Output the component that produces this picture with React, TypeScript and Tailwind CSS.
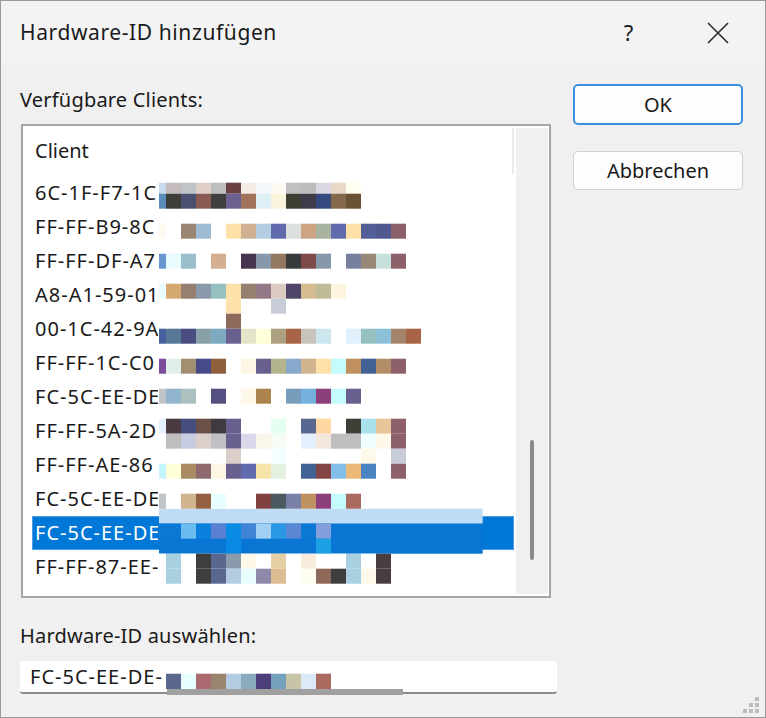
import React from "react";

// redaction mosaic, global 15px grid (x: 165 + 15*col, col -1 is the 7px sliver at 158)
const MOSAIC: [number, number, string][] = [
  [181.7, 11, "c9dcee c4bcbc c0c4c8 e0cfc8 bebebe 6b4040 f3ece4 f3f7fc fdfaf3 c0c0c0 bcbcbe dbd8e4 e8d8c8 fffff0"],
  [192.7, 15, "5b8bbb 3e3e38 4c5070 8a5a54 3f3f3f 6b6090 a0735a dcf0f6 faf3dc 3e3e32 3e3c48 344a7e 84684a 6a5234"],
  [222.7, 15, "fdf8f0 fff 9a8672 a0bcd4 fff fde1a8 cfb090 b4cce2 626aae dce0dc cca484 a8b4a0 626aae fde1a8 545e96 505890 8c606a"],
  [252.7, 15, "6a96d4 e8fcfe 9abecc fff d4b090 fff 46344e 8698aa 937860 383c3c 7f4a4a 8698aa fff 7880a0 978878 c6e0dc 8e606a"],
  [282.7, 15, "e8fcfe d4a870 967e70 8a9aaa 96c0c0 fde1a8 968070 947888 dccac0 504468 d4bc90 c0bc98 fdf5e0"],
  [297.7, 15, ". . . . . fde1a8 . . c8ccd8"],
  [312.7, 15, ". . . . . 8e6a5a"],
  [327.7, 15, "4660a0 587898 484c80 88a0a8 7eaac0 6a6090 e6e4c8 fefed8 aca080 a86446 c8c4bc cce6f0 fff e0f0fc 96c0c0 8cc0d8 a4846a a86446"],
  [357.7, 15, "7c4c9c e0f0e8 a28e70 464a88 8e603e fff fef6e4 6a6090 b4b48e 88a8cc d0b490 fde1a8 c4fcfc c09060 406294 b48e68 8e606a"],
  [387.7, 15, "c0c4c8 92b4cc acc0c0 fff 545080 fff fef8e8 aa844c fff 789cbc 74b0dc 8c3e7a c4fcfc 6a6090"],
  [417.7, 15, "e4f0fe 483a40 464e80 6a5046 3f3a40 6a6090 fff fff e4fef0 fff 586890 fed8a0 fff 3e3e36 a8e0ec e8c498 8e606a"],
  [432.7, 15, "fff bebebe c8cce0 dccec8 c0c0c4 6a6090 d8d8ea faf6ea f4fcf4 fff e4f0fe f4e8dc bebebe bebebe f0fefe fef8e8 8e606a"],
  [447.7, 15, ". . . . . dccec8 . . f4fefe . . . . . fef8e8 . c8ccd8"],
  [462.7, 15, "c4f4fc fefed8 aa8c64 8e6a6e fef6e4 6a6090 626aae f6e4a8 e4f0e0 fff 406294 824444 82bee8 ecb878 4a84c0 fff 8e606a"],
  [492.7, 15, "c0c4c8 fff d0b490 926040 e8fefe fff fff 804040 4a5a60 7880a8 be9260 8c3e7a c4fcfc aa6a60"],
  [522.7, 15, "0a78d4 0a78d4 6abcf0 0a80dc 5a80d4 0a8ce4 4084d8 a0d0f4 2a98e4 5a88d4 0a78d4 84a0dc"],
  [537.7, 15, ". . . . . 0a88e4 . . . . . 1ea0e4"],
  [552.7, 15, "fff a8d0e0 fff 3e3e3e 5a6890 8a9aaa fef8e8 fff e4d0a4 fff f8ecdc fff fff a8d0e0 fff 483e40"],
  [567.7, 15, "fff a8d0e0 fff 3e3e3e 5a6890 b4cce2 e8fefe 9088a8 dcbc90 fff fefef0 906858 3e3e3e a8d0e0 fef8e8 483e40"],
  [672.7, 15.3, ". 5a6890 e8fefe aa6a70 9a8470 b4cce2 8aaabe 4c3e7a 74a0bc c8c4a8 dceaf8 aa6a60"],
];

const ROWS = [
  "6C-1F-F7-1C",
  "FF-FF-B9-8C",
  "FF-FF-DF-A7",
  "A8-A1-59-01",
  "00-1C-42-9A",
  "FF-FF-1C-C0",
  "FC-5C-EE-DE",
  "FF-FF-5A-2D",
  "FF-FF-AE-86",
  "FC-5C-EE-DE",
  "FC-5C-EE-DE",
  "FF-FF-87-EE-",
];
const SELECTED = 10;

const Mosaic = () => (
  <svg className="pointer-events-none absolute left-0 top-0" width={766} height={718}>
    {/* selected row: pale strip over it, blue block below */}
    <rect x={158} y={507.7} width={323.7} height={15} fill="#c0dcf4" />
    <rect x={158} y={522.7} width={323.7} height={30} fill="#0a76d4" />
    {MOSAIC.map(([y, h, cells], r) =>
      cells.split(" ").map((c, i) =>
        c === "." ? null : (
          <rect
            key={`${r}-${i}`}
            x={i === 0 ? 158 : 165 + (i - 1) * 15}
            y={y}
            width={i === 0 ? 7 : 15}
            height={h}
            fill={"#" + c}
          />
        )
      )
    )}
    <rect x={166} y={688} width={236} height={6} fill="#a0a0a0" />
    {/* size grip */}
    {[
      [754, 696],
      [748, 702],
      [754, 702],
      [742, 708],
      [748, 708],
      [754, 708],
    ].map(([x, y]) => (
      <rect key={`${x}-${y}`} x={x} y={y} width={4} height={4} fill="#bdbdbd" />
    ))}
  </svg>
);

export default function App() {
  return (
    <div className="relative h-[718px] w-[766px] overflow-hidden border border-[#9a9a9a] bg-[#f0f0f0] font-['Noto_Sans',sans-serif] text-[#1a1a1a]">
      {/* title bar */}
      <div className="flex h-[63px] items-center bg-[#f3f3f3] pr-[13px]">
        <div className="flex-1 pl-[19px] text-[21px] tracking-[0.6px]">Hardware-ID hinzufügen</div>
        <div className="mr-[20px] flex h-full w-[69px] items-center justify-center text-[22px]">?</div>
        <div className="flex h-full w-[69px] items-center justify-center">
          <svg width="22" height="22" viewBox="0 0 22 22">
            <path d="M1 1 L21 21 M21 1 L1 21" stroke="#2b2b2b" strokeWidth="1.6" />
          </svg>
        </div>
      </div>

      <div className="flex px-[19px]">
        {/* left side */}
        <div className="w-[537px] pt-[24px]">
          <div className="text-[20px] leading-[24px] tracking-[0.2px]">Verfügbare Clients:</div>
          <div className="ml-[1px] mt-[12px] flex h-[474px] w-[530px] border-2 border-[#a3a5a9] bg-white">
            <div className="flex-1">
              <div className="flex h-[50px]">
                <div className="flex flex-1 items-center pl-[12px] text-[20px]">Client</div>
                <div className="my-[2px] mr-[2px] w-[2px] bg-[#ebebeb]" />
              </div>
              {ROWS.map((r, i) =>
                i === SELECTED ? (
                  <div key={i} className="flex h-[34px] pl-[9px] pr-[2px]">
                    <div className="flex flex-1 items-center border border-[#4a9de6] bg-[#0078d7] pl-[2px] text-[20px] tracking-[1px] text-white">
                      <span className="block w-[123px] overflow-hidden whitespace-nowrap">{r}</span>
                    </div>
                  </div>
                ) : (
                  <div key={i} className="flex h-[34px] items-center pl-[12px] text-[20px] tracking-[1px]">
                    <span className="block w-[123px] overflow-hidden whitespace-nowrap">{r}</span>
                  </div>
                )
              )}
            </div>
            <div className="my-[2px] mr-[1px] w-[32px] bg-[#f0f0f0] pt-[312px]">
              <div className="mx-auto h-[120px] w-[4px] rounded-full bg-[#8a8a8a]" />
            </div>
          </div>
          <div className="mt-[26px] text-[20px] leading-[24px] tracking-[0.2px]">Hardware-ID auswählen:</div>
          <div className="mt-[13px] flex h-[33px] items-center rounded-[3px] border-b-2 border-[#8c8c8c] bg-white pl-[10px] text-[20px] tracking-[1px]">
            FC-5C-EE-DE-
          </div>
        </div>

        {/* buttons */}
        <div className="ml-[16px] w-[170px] pt-[20px]">
          <div className="flex h-[41px] items-center justify-center rounded-[5px] border-2 border-[#3c8fe0] bg-[#fdfdfd] text-[20px]">
            OK
          </div>
          <div className="mt-[26px] flex h-[39px] items-center justify-center rounded-[5px] border border-[#d0d0d0] bg-[#fdfdfd] text-[20px]">
            Abbrechen
          </div>
        </div>
      </div>

      <Mosaic />
    </div>
  );
}
